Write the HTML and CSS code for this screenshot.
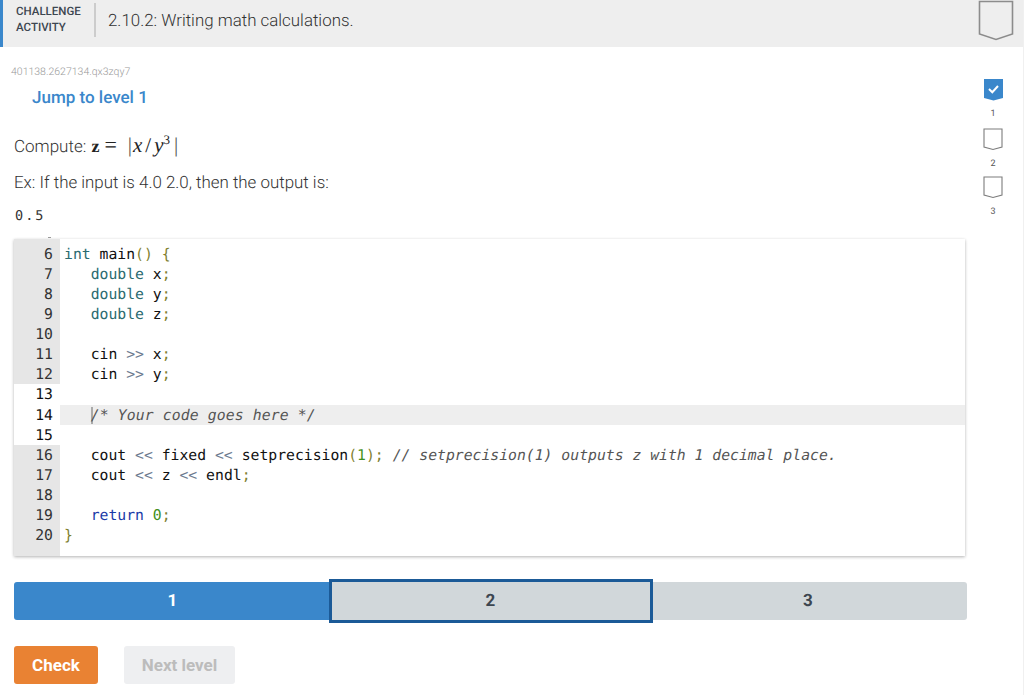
FILE: index.html
```html
<!DOCTYPE html>
<html lang="en">
<head>
<meta charset="utf-8">
<title>Challenge activity</title>
<link rel="stylesheet" href="styles.css">
</head>
<body>
<header class="header">
  <div class="label">CHALLENGE<br>ACTIVITY</div>
  <div class="title">2.10.2: Writing math calculations.</div>
  <svg class="ribbon-big" width="36" height="42" viewBox="0 0 36 42"><path d="M1.5 1.5H34.5V34L18 39.5L1.5 34Z" fill="none" stroke="#8c8c8c" stroke-width="1.6"/></svg>
</header>
<div class="page">
  <main class="content">
    <div class="code-id">401138.2627134.qx3zqy7</div>
    <a class="jump">Jump to level 1</a>
    <p class="compute">Compute: <span class="math"><b class="mz">z</b><span class="eq">=</span><span class="bar">|</span><i>x</i><span class="sl">/</span><i>y</i><sup>3</sup><span class="bar end">|</span></span></p>
    <p class="example">Ex: If the input is 4.0 2.0, then the output is:</p>
    <pre class="output">0.5</pre>
    <div class="editor">
      <div class="row"><span class="ln">6</span><code><span class="k">int</span> main<span class="p">()</span> <span class="p">{</span></code></div>
      <div class="row"><span class="ln">7</span><code>   <span class="k">double</span> x<span class="p">;</span></code></div>
      <div class="row"><span class="ln">8</span><code>   <span class="k">double</span> y<span class="p">;</span></code></div>
      <div class="row"><span class="ln">9</span><code>   <span class="k">double</span> z<span class="p">;</span></code></div>
      <div class="row"><span class="ln">10</span><code></code></div>
      <div class="row"><span class="ln">11</span><code>   cin <span class="o">&gt;&gt;</span> x<span class="p">;</span></code></div>
      <div class="row"><span class="ln">12</span><code>   cin <span class="o">&gt;&gt;</span> y<span class="p">;</span></code></div>
      <div class="row open"><span class="ln">13</span><code></code></div>
      <div class="row open active"><span class="ln">14</span><code>   <span class="c caret">/* Your code goes here */</span></code></div>
      <div class="row open"><span class="ln">15</span><code></code></div>
      <div class="row"><span class="ln">16</span><code>   cout <span class="o">&lt;&lt;</span> fixed <span class="o">&lt;&lt;</span> setprecision<span class="p">(</span><span class="n">1</span><span class="p">);</span> <span class="c">// setprecision(1) outputs z with 1 decimal place.</span></code></div>
      <div class="row"><span class="ln">17</span><code>   cout <span class="o">&lt;&lt;</span> z <span class="o">&lt;&lt;</span> endl<span class="p">;</span></code></div>
      <div class="row"><span class="ln">18</span><code></code></div>
      <div class="row"><span class="ln">19</span><code>   <span class="r">return</span> <span class="n">0</span><span class="p">;</span></code></div>
      <div class="row"><span class="ln">20</span><code><span class="p">}</span></code></div>
    </div>
    <div class="levels">
      <div class="level done">1</div>
      <div class="level current">2</div>
      <div class="level last">3</div>
    </div>
    <div class="actions">
      <button class="btn check">Check</button>
      <button class="btn next">Next level</button>
    </div>
  </main>
  <aside class="steps">
    <div class="step">
      <svg width="19" height="22" viewBox="0 0 19 22"><path d="M0 0H19V19L9.5 21.5L0 19Z" fill="#3a87cb"/><path d="M5 10L8.3 13.2L14 7" fill="none" stroke="#fff" stroke-width="2"/></svg>
      <span>1</span>
    </div>
    <div class="step">
      <svg width="20" height="23" viewBox="0 0 20 23"><path d="M1 1H19V19L10 21.5L1 19Z" fill="none" stroke="#7d7d7d" stroke-width="1.1"/></svg>
      <span>2</span>
    </div>
    <div class="step">
      <svg width="20" height="23" viewBox="0 0 20 23"><path d="M1 1H19V19L10 21.5L1 19Z" fill="none" stroke="#7d7d7d" stroke-width="1.1"/></svg>
      <span>3</span>
    </div>
  </aside>
</div>
</body>
</html>
```
FILE: styles.css
```css
* { box-sizing: border-box; }
html, body { margin: 0; height: 100%; }
body {
  background: #fff;
  font-family: Roboto, sans-serif;
  color: #4a4f54;
  overflow: hidden;
  border-right: 1px solid #f0f0f0;
  text-rendering: geometricPrecision;
}
.header {
  display: flex;
  align-items: flex-start;
  height: 47px;
  width: 1024px;
  background: #eeeeee;
  border-left: 3px solid #3a87cb;
}
.label {
  margin-top: 3px;
  padding: 0 11px 0 13px;
  width: 93px;
  height: 34px;
  font-size: 11.5px;
  font-weight: 500;
  line-height: 16px;
  color: #3d4650;
  border-right: 2px solid #cccccc;
}
.title {
  margin: 12px 0 0 12px;
  font-size: 16.9px;
  font-weight: 300;
  line-height: 19px;
  color: #333;
  flex: 1;
}
.ribbon-big { flex: none; margin: 0 10px 0 0; }
.page { display: flex; }
.content { width: 967px; padding-left: 14px; }
.code-id {
  margin: 19px 0 0 -3px;
  font-size: 10.5px;
  line-height: 12px;
  font-weight: 300;
  color: #9a9a9a;
}
.jump {
  display: block;
  margin: 11px 0 0 18px;
  font-size: 17px;
  font-weight: 500;
  line-height: 19px;
  color: #3a87cb;
}
.compute {
  margin: 27px 0 0;
  font-size: 17px;
  font-weight: 300;
  line-height: 24px;
  color: #333;
}
.math { font-family: "Liberation Serif", serif; font-size: 21px; font-weight: 400; line-height: 0; color: #222; }
.mz { font-size: 18px; font-weight: 700; margin-left: 1px; }
.eq { margin: 0 11px 0 5px; font-size: 22px; font-weight: 300; }
.bar { font-size: 21px; font-weight: 300; color: #555; }
.bar.end { margin-left: 4px; }
.math i { margin-left: 1px; }
.sl { margin: 0 2px 0 3px; }
.math sup { font-size: 13px; line-height: 0; }
.example {
  margin: 15px 0 0;
  font-size: 16.9px;
  font-weight: 300;
  line-height: 19px;
  color: #333;
}
.output {
  margin: 15px 0 0;
  font-family: "DejaVu Sans Mono", monospace;
  font-size: 13.5px;
  line-height: 16px;
  letter-spacing: 2px;
  padding-left: 1px;
  color: #333;
}
.editor {
  position: relative;
  margin-top: 15px;
  padding-top: 5px;
  width: 951px;
  height: 317px;
  background: linear-gradient(#fff, #fff) no-repeat 46px 0 / 905px 100%, #e6e6e6;
  box-shadow: 0 1px 3px rgba(0, 0, 0, 0.3);
  font-family: "DejaVu Sans Mono", monospace;
  font-size: 14.76px;
  line-height: 20.07px;
  color: #111;
}
.editor::before {
  content: "";
  position: absolute;
  left: 34px;
  top: -2px;
  width: 3px;
  height: 1px;
  background: #999;
}
.row { display: flex; height: 20.07px; }
.row.open .ln { background: #fff; color: #111; }
.row.active code { background: #eeeeee; }
.ln {
  flex: 0 0 46px;
  padding: 1px 7px 0 0;
  text-align: right;
  color: #333;
}
code {
  flex: 1;
  padding: 1px 0 0 4px;
  font: inherit;
  white-space: pre;
}
.k { color: #2a6a70; }
.p { color: #7f7f30; }
.o { color: #6d7b90; }
.r { color: #1a3aa8; }
.n { color: #3f8f20; }
.c { color: #555; font-style: italic; }
.caret { box-shadow: inset 2px 0 0 #aaa; letter-spacing: 0.12px; }
.levels {
  display: flex;
  align-items: center;
  margin-top: 23px;
  height: 44px;
  width: 953px;
}
.level {
  flex: 0 0 318px;
  height: 38px;
  display: flex;
  align-items: center;
  justify-content: center;
  font-size: 17px;
  font-weight: 700;
  color: #3d4650;
  background: #d1d7da;
}
.level.done {
  flex-basis: 315px;
  padding-left: 2px;
  color: #fff;
  background: #3a87cb;
  border-radius: 3px 0 0 3px;
}
.level.current {
  flex-basis: 324px;
  height: 44px;
  border: 3px solid #1b5a97;
  padding-right: 1px;
}
.level.last {
  flex-basis: 314px;
  padding-right: 4px;
  border-radius: 0 3px 3px 0;
}
.actions { display: flex; gap: 26px; margin-top: 23px; }
.btn {
  height: 38px;
  border: 0;
  border-radius: 3px;
  font-family: Roboto, sans-serif;
  font-size: 17px;
  font-weight: 700;
  padding: 0;
}
.check { width: 84px; background: #e98233; color: #fff; }
.next { width: 111px; background: #eeeff1; color: #bcbcbc; }
.steps {
  flex: 1;
  display: flex;
  flex-direction: column;
  align-items: center;
  padding-top: 32px;
  padding-right: 4px;
  gap: 6.5px;
}
.step {
  display: flex;
  flex-direction: column;
  align-items: center;
  gap: 6px;
  font-size: 9px;
  line-height: 14px;
  height: 43px;
  color: #555;
}
.step:not(:first-child) { margin-top: -1px; }
.step svg { display: block; }
```
